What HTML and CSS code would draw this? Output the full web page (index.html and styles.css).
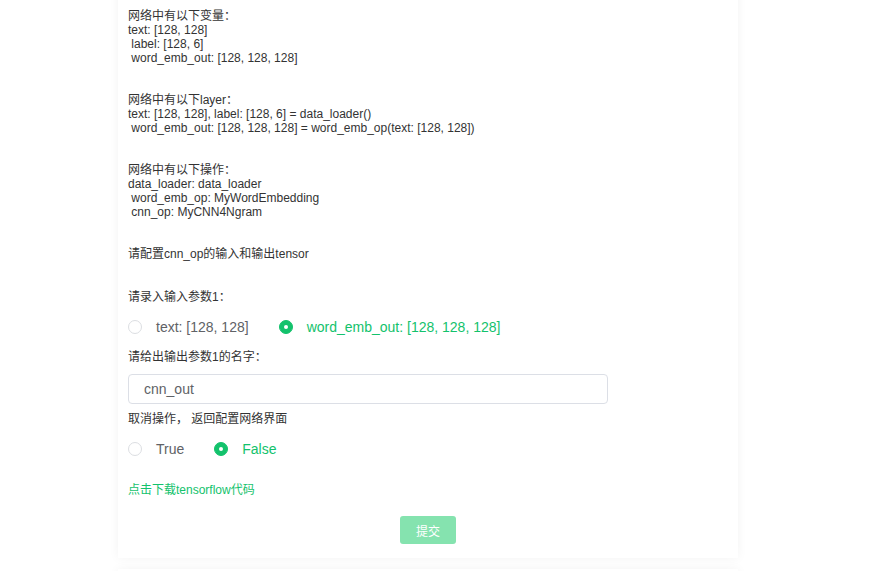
FILE: index.html
```html
<!DOCTYPE html>
<html lang="zh">
<head>
<meta charset="utf-8">
<title>配置网络</title>
<link rel="stylesheet" href="styles.css">
</head>
<body>
<div class="page">
  <div class="card">
    <div class="info">网络中有以下变量：
text: [128, 128]
 label: [128, 6]
 word_emb_out: [128, 128, 128]


网络中有以下layer：
text: [128, 128], label: [128, 6] = data_loader()
 word_emb_out: [128, 128, 128] = word_emb_op(text: [128, 128])


网络中有以下操作：
data_loader: data_loader
 word_emb_op: MyWordEmbedding
 cnn_op: MyCNN4Ngram


请配置cnn_op的输入和输出tensor</div>

    <div class="label first">请录入输入参数1：</div>
    <div class="radios">
      <label class="radio"><span class="dot"></span><span class="rtext">text: [128, 128]</span></label>
      <label class="radio checked"><span class="dot"></span><span class="rtext">word_emb_out: [128, 128, 128]</span></label>
    </div>

    <div class="label">请给出输出参数1的名字：</div>
    <div class="input">cnn_out</div>

    <div class="label after-input">取消操作， 返回配置网络界面</div>
    <div class="radios">
      <label class="radio"><span class="dot"></span><span class="rtext">True</span></label>
      <label class="radio checked"><span class="dot"></span><span class="rtext">False</span></label>
    </div>

    <a class="link">点击下载tensorflow代码</a>

    <div class="actions">
      <button class="submit" type="button">提交</button>
    </div>
  </div>
  <div class="card next"></div>
</div>
</body>
</html>
```

FILE: styles.css
```css
html, body {
  margin: 0;
  padding: 0;
  background: #ffffff;
  overflow: hidden;
  height: 571px;
}

body {
  font-family: "Liberation Sans", "Noto Sans CJK SC", sans-serif;
  font-size: 12px;
  color: #333333;
}

.page {
  width: 620px;
  margin-left: 118px;
  margin-top: -30px;
}

.card {
  background: #ffffff;
  box-shadow: 0 0 10px rgba(0, 0, 0, 0.05);
  padding: 39px 10px 14px 10px;
}

.card.next {
  margin-top: 11px;
  height: 100px;
  padding: 0;
}

.info {
  white-space: pre-wrap;
  line-height: 14px;
}

.label {
  line-height: 14px;
}

.label.first {
  margin-top: 29px;
}

.label.after-input {
  margin-top: 8px;
}

.radios {
  display: flex;
  align-items: center;
  height: 20px;
  margin: 13px 0;
}

.radio {
  display: flex;
  align-items: center;
  margin-right: 30px;
  font-size: 14px;
  color: #606266;
}

.dot {
  box-sizing: border-box;
  width: 14px;
  height: 14px;
  border: 1px solid #dcdee2;
  border-radius: 50%;
  margin-right: 14px;
  display: flex;
  align-items: center;
  justify-content: center;
  background: #fff;
}

.radio.checked {
  color: #13c26c;
}

.radio.checked .dot {
  background: #13c26c;
  border-color: #13c26c;
}

.radio.checked .dot::after {
  content: "";
  width: 4px;
  height: 4px;
  border-radius: 50%;
  background: #ffffff;
}

.input {
  box-sizing: border-box;
  width: 480px;
  height: 30px;
  margin-top: 10px;
  border: 1px solid #dcdfe6;
  border-radius: 4px;
  padding: 0 15px;
  display: flex;
  align-items: center;
  font-size: 14px;
  color: #606266;
}

.link {
  display: block;
  margin-top: 24px;
  line-height: 14px;
  color: #13c26c;
}

.actions {
  display: flex;
  justify-content: center;
  margin-top: 19px;
}

.submit {
  width: 56px;
  height: 28px;
  border: none;
  border-radius: 3px;
  background: #85e3af;
  color: #ffffff;
  font-family: "Liberation Sans", "Noto Sans CJK SC", sans-serif;
  font-size: 12px;
  padding: 0;
}
```
